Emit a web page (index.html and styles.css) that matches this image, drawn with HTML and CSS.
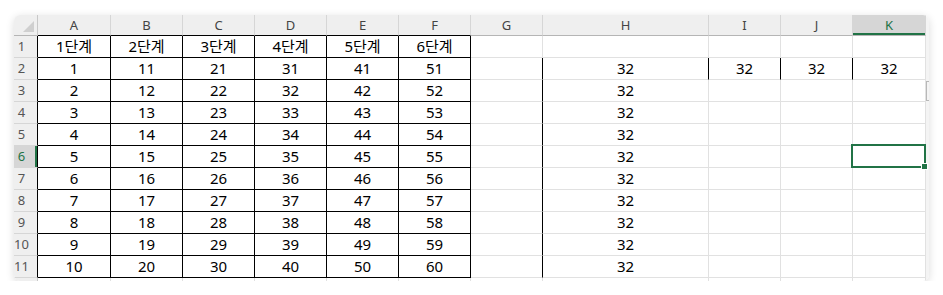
FILE: index.html
```html
<!DOCTYPE html>
<html>
<head>
    <title>Sheet1</title>
    <link rel="stylesheet" href="styles.css">
</head>
<body>
    <div class="window">
        <div class="sheet">
            <!-- column headers -->
            <div class="hd corner"></div>
            <div class="hd dk">A</div>
            <div class="hd dk">B</div>
            <div class="hd dk">C</div>
            <div class="hd dk">D</div>
            <div class="hd dk">E</div>
            <div class="hd dk">F</div>
            <div class="hd">G</div>
            <div class="hd">H</div>
            <div class="hd">I</div>
            <div class="hd">J</div>
            <div class="hd sel">K</div>

            <div class="rh">1</div>
            <div class="c b">1단계</div><div class="c b">2단계</div><div class="c b">3단계</div><div class="c b">4단계</div><div class="c b">5단계</div><div class="c b">6단계</div>
            <div class="c"></div><div class="c"></div><div class="c"></div><div class="c"></div><div class="c"></div>

            <div class="rh">2</div>
            <div class="c b">1</div><div class="c b">11</div><div class="c b">21</div><div class="c b">31</div><div class="c b">41</div><div class="c b">51</div>
            <div class="c br"></div><div class="c br">32</div><div class="c br">32</div><div class="c br">32</div><div class="c">32</div>

            <div class="rh">3</div>
            <div class="c b">2</div><div class="c b">12</div><div class="c b">22</div><div class="c b">32</div><div class="c b">42</div><div class="c b">52</div>
            <div class="c br"></div><div class="c">32</div><div class="c"></div><div class="c"></div><div class="c"></div>

            <div class="rh">4</div>
            <div class="c b">3</div><div class="c b">13</div><div class="c b">23</div><div class="c b">33</div><div class="c b">43</div><div class="c b">53</div>
            <div class="c br"></div><div class="c">32</div><div class="c"></div><div class="c"></div><div class="c"></div>

            <div class="rh">5</div>
            <div class="c b">4</div><div class="c b">14</div><div class="c b">24</div><div class="c b">34</div><div class="c b">44</div><div class="c b">54</div>
            <div class="c br"></div><div class="c">32</div><div class="c"></div><div class="c"></div><div class="c"></div>

            <div class="rh sel">6</div>
            <div class="c b">5</div><div class="c b">15</div><div class="c b">25</div><div class="c b">35</div><div class="c b">45</div><div class="c b">55</div>
            <div class="c br"></div><div class="c">32</div><div class="c"></div><div class="c"></div><div class="c active"></div>

            <div class="rh">7</div>
            <div class="c b">6</div><div class="c b">16</div><div class="c b">26</div><div class="c b">36</div><div class="c b">46</div><div class="c b">56</div>
            <div class="c br"></div><div class="c">32</div><div class="c"></div><div class="c"></div><div class="c"></div>

            <div class="rh">8</div>
            <div class="c b">7</div><div class="c b">17</div><div class="c b">27</div><div class="c b">37</div><div class="c b">47</div><div class="c b">57</div>
            <div class="c br"></div><div class="c">32</div><div class="c"></div><div class="c"></div><div class="c"></div>

            <div class="rh">9</div>
            <div class="c b">8</div><div class="c b">18</div><div class="c b">28</div><div class="c b">38</div><div class="c b">48</div><div class="c b">58</div>
            <div class="c br"></div><div class="c">32</div><div class="c"></div><div class="c"></div><div class="c"></div>

            <div class="rh">10</div>
            <div class="c b">9</div><div class="c b">19</div><div class="c b">29</div><div class="c b">39</div><div class="c b">49</div><div class="c b">59</div>
            <div class="c br"></div><div class="c">32</div><div class="c"></div><div class="c"></div><div class="c"></div>

            <div class="rh">11</div>
            <div class="c b">10</div><div class="c b">20</div><div class="c b">30</div><div class="c b">40</div><div class="c b">50</div><div class="c b">60</div>
            <div class="c br"></div><div class="c">32</div><div class="c"></div><div class="c"></div><div class="c"></div>

            <!-- partly visible row 12 -->
            <div class="rh last"></div>
            <div class="c"></div><div class="c"></div><div class="c"></div><div class="c"></div><div class="c"></div><div class="c"></div>
            <div class="c"></div><div class="c"></div><div class="c"></div><div class="c"></div><div class="c"></div>
        </div>
        <div class="vbar"><div class="thumb"></div></div>
    </div>
</body>
</html>
```

FILE: styles.css
```css
* {
    margin: 0;
    padding: 0;
    box-sizing: border-box;
}

body {
    background: #fff;
    font-family: 'Noto Sans', 'Noto Sans CJK KR', sans-serif;
}

.window {
    display: flex;
    width: 915px;
    height: 266px;
    margin: 15px 0 0 14px;
    background: #fff;
    border-radius: 6px;
    overflow: hidden;
    box-shadow: 0 2px 9px rgba(0, 0, 0, 0.14);
}

.sheet {
    display: grid;
    grid-template-columns: 24px 73px repeat(6, 72px) 166px 72px 72px 73px;
    grid-template-rows: 21px;
    grid-auto-rows: 22px;
    width: 912px;
}

.hd {
    background: #efefef;
    color: #444;
    font-size: 13px;
    line-height: 20px;
    text-align: center;
    border-right: 1px solid #d6d6d6;
    border-bottom: 1px solid #b5b5b5;
}

.hd.dk {
    border-bottom-color: #000;
}

.hd.sel {
    background: #d6d6d6;
    color: #217346;
    box-shadow: inset 0 -2px 0 #217346;
}

.corner {
    position: relative;
    border-right-color: #c8c8c8;
}

.corner::after {
    content: "";
    position: absolute;
    right: 3px;
    bottom: 3px;
    border-left: 11px solid transparent;
    border-bottom: 11px solid #cfcfcf;
}

.rh {
    background: #efefef;
    color: #555;
    font-size: 13px;
    line-height: 21px;
    text-align: center;
    padding-right: 8px;
    border-right: 1px solid #000;
    border-bottom: 1px solid #d6d6d6;
}

.rh.sel {
    background: #d6d6d6;
    color: #217346;
    box-shadow: inset -2px 0 0 #217346;
}

.rh.last {
    border-right-color: #c8c8c8;
}

.c {
    position: relative;
    font-size: 15px;
    line-height: 21px;
    color: #000;
    text-align: center;
    border-right: 1px solid #e1e1e1;
    border-bottom: 1px solid #e1e1e1;
}

.c.b {
    border-right-color: #000;
    border-bottom-color: #000;
}

.c.br {
    border-right-color: #000;
}

.active::after {
    content: "";
    position: absolute;
    top: -2px;
    left: -2px;
    right: -1px;
    bottom: -1px;
    border: 2px solid #217346;
}

.active::before {
    content: "";
    position: absolute;
    right: -3px;
    bottom: -3px;
    width: 5px;
    height: 5px;
    background: #217346;
    border: 1px solid #fff;
    box-sizing: content-box;
    z-index: 2;
}

.vbar {
    position: relative;
    width: 3px;
    background: #f4f4f4;
}

.thumb {
    position: absolute;
    top: 66px;
    left: 0;
    width: 3px;
    height: 20px;
    border: 1px solid #b8b8b8;
    border-right: none;
}
```
